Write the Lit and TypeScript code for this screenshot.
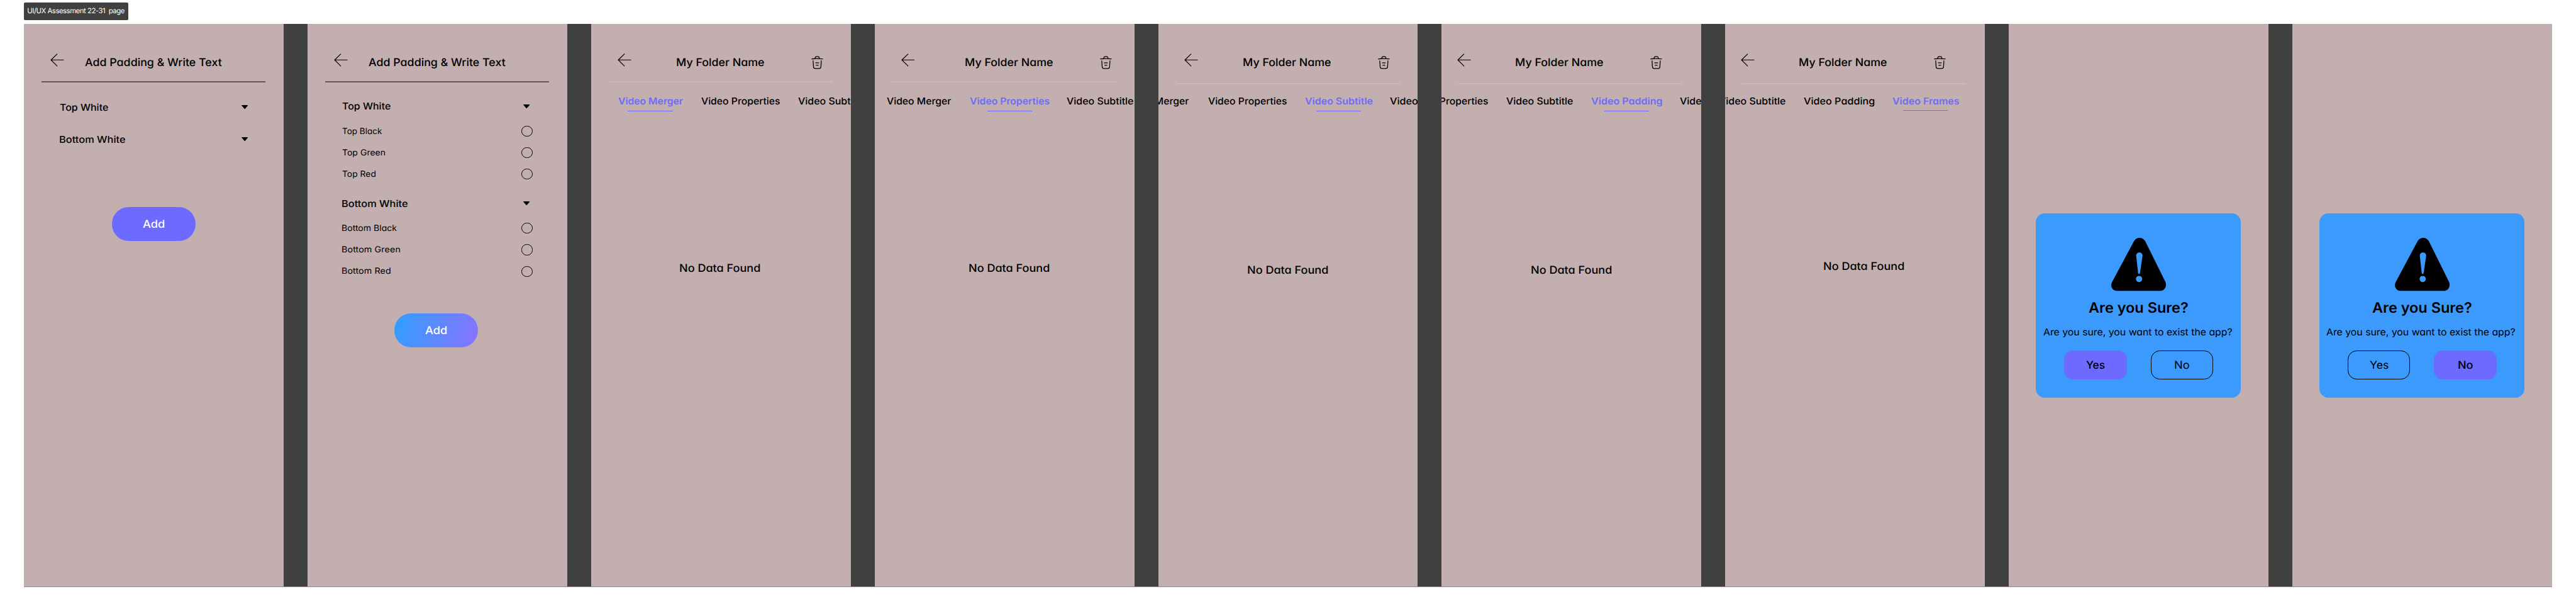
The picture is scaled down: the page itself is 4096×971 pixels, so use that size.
import { LitElement, html, css, svg, nothing } from "lit";
import { customElement, property } from "lit/decorators.js";
import { classMap } from "lit/directives/class-map.js";
import { styleMap } from "lit/directives/style-map.js";

const FONT = '"Inter", "Open Sans", sans-serif';
const MAX_STRETCH = 1.08;

/** One line of text whose visible width is tuned to `width` by stretch, then tracking. */
@customElement("fit-text")
class FitText extends LitElement {
  static styles = css`
    :host {
      display: block;
      flex: none;
      white-space: pre;
      font-family: "Inter", "Open Sans", sans-serif;
      text-rendering: geometricPrecision;
      font-feature-settings: "cv11" 1;
    }
    .run {
      display: inline-block;
      transform-origin: 0 0;
    }
  `;
  @property() text = "";
  @property({ type: Number }) width = 0;

  firstUpdated() {
    const run = this.renderRoot.querySelector(".run") as HTMLElement;
    this.style.width = `${this.width}px`;
    const scale = this.getBoundingClientRect().width / this.width;
    const advance = run.getBoundingClientRect().width / scale;
    const cs = getComputedStyle(this);
    const size = parseFloat(cs.getPropertyValue("--size"));
    const drop = parseFloat(cs.getPropertyValue("--drop")) || 0;
    const ctx = document.createElement("canvas").getContext("2d")!;
    ctx.font = `${cs.fontWeight} 100px ${FONT}`;
    const first = ctx.measureText(this.text[0]);
    const last = ctx.measureText(this.text[this.text.length - 1]);
    const left = (-first.actualBoundingBoxLeft * size) / 100;
    const right = ((last.width - last.actualBoundingBoxRight) * size) / 100;
    const ink = advance - left - right;
    const stretch = Math.max(1, Math.min(MAX_STRETCH, this.width / ink));
    run.style.letterSpacing = `${(this.width / stretch - ink) / (this.text.length - 1)}px`;
    run.style.marginLeft = `${-left * stretch}px`;
    run.style.transform = `translateY(${drop}px) scaleX(${stretch})`;
  }

  render() {
    return html`<span class="run">${this.text}</span>`;
  }
}

const backIcon = svg`<svg class="icon" width="23" height="22" viewBox="0 0 23 22" fill="none" stroke="#000" stroke-width="1.25" stroke-linecap="round" stroke-linejoin="round"><path d="M11.3 .9 1.2 10.8l10.1 10.1"/><path d="M1.4 10.8h20.8"/></svg>`;

const trashIcon = svg`<svg class="icon" width="24" height="24" viewBox="0 0 24 24" fill="none" stroke="#000" stroke-width="1.35" stroke-linecap="round" stroke-linejoin="round"><path d="M21 5.98c-3.33-.33-6.68-.5-10.02-.5-1.98 0-3.96.1-5.94.3L3 5.98"/><path d="M8.5 4.97l.22-1.31C8.88 2.71 9 2 10.69 2h2.62c1.69 0 1.82.75 1.97 1.67l.22 1.3"/><path d="M18.85 9.14l-.65 10.07C18.09 20.78 18 22 15.21 22H8.79C6 22 5.91 20.78 5.8 19.21L5.15 9.14"/><path d="M10.33 16.5h3.33M9.5 12.5h5"/></svg>`;

const caretIcon = svg`<svg class="icon" width="11" height="7" viewBox="0 0 11 7"><path d="M.6 0h9.8q.8 0 .3.7L6.2 6q-.7.8-1.4 0L.3.7Q-.2 0 .6 0z"/></svg>`;

const warnIcon = svg`<svg class="icon" width="92" height="89" viewBox="0 0 92 89"><path fill-rule="evenodd" d="M38 5.600C42.200-1.700 52.500-1.700 56.800 5.600L90.300 73.200C93.600 79.600 90 88.600 81.800 88.600H9.800C1.600 88.600-2.200 80.500 1.500 73.600zM47 24.400c-3.400 0-5.500 2.500-5.300 5.800l3.200 28.400c.2 2.300 3 2.300 3.200 0l4.200-28.400c.2-3.300-1.900-5.800-5.300-5.800zM46.500 63.500a5.200 5.200 0 1 0 .01 0z"/></svg>`;

type Tab = { text: string; x: number; width: number; active?: boolean };

const merger = (x: number): Tab => ({ text: "Video Merger", x, width: 107 });
const properties = (x: number): Tab => ({ text: "Video Properties", x, width: 131 });
const subtitle = (x: number): Tab => ({ text: "Video Subtitle", x, width: 111 });
const padding = (x: number): Tab => ({ text: "Video Padding", x, width: 117.5 });
const frames = (x: number): Tab => ({ text: "Video Frames", x, width: 110 });
const on = (tab: Tab, width: number): Tab => ({ ...tab, width, active: true });

type Folder = {
  back: number;
  title: number;
  trash: number;
  rule: [number, number];
  tabsY: number;
  tabs: Tab[];
  empty: [number, number];
};

const folders: Folder[] = [
  { back: 44, title: 143.3, trash: 366, rule: [29, 96], tabsY: 117.2, empty: [149.3, 394],
    tabs: [on(merger(45.3), 107.8), properties(184.3), subtitle(346.3)] },
  { back: 44, title: 152.5, trash: 375, rule: [29, 96], tabsY: 117.2, empty: [158.5, 394],
    tabs: [merger(20.3), on(properties(159.3), 132.7), subtitle(321.3)] },
  { back: 44, title: 142.5, trash: 365, rule: [29, 99], tabsY: 117.2, empty: [150.7, 397],
    tabs: [merger(-56), properties(83.5), on(subtitle(245.3), 112.5), padding(387.5)] },
  { back: 26, title: 124.5, trash: 347, rule: [27, 99], tabsY: 117.2, empty: [150.7, 397],
    tabs: [properties(-54), subtitle(108.3), on(padding(250.3), 118), frames(398.3)] },
  { back: 26, title: 124.5, trash: 347, rule: [27, 99], tabsY: 116.2, empty: [165.7, 391],
    tabs: [subtitle(-11), padding(131.5), on(frames(279.3), 111)] },
];

const px = (n: number) => `${n}px`;

@customElement("app-root")
class AppRoot extends LitElement {
  static styles = css`
    :host {
      display: block;
      width: 4096px;
      height: 971px;
      overflow: hidden;
      background: #fff;
    }
    .page {
      zoom: 0.95123;
      width: 4306px;
      height: 1021px;
      padding: 4px 40px 0;
      box-sizing: border-box;
    }
    .icon {
      display: block;
      flex: none;
    }
    .tag {
      --size: 12;
      display: flex;
      width: 174px;
      height: 30px;
      box-sizing: border-box;
      padding: 6px 0 0 6.5px;
      border-radius: 2px;
      background: #404040;
      color: #fff;
      font-size: 12px;
      line-height: 16px;
      margin-bottom: 6px;
    }
    .tag fit-text {
      font-feature-settings: normal;
    }
    .board {
      --drop: 0.9;
      display: flex;
      gap: 40px;
      height: 940px;
      background: #404040;
      border-bottom: 1px solid #8d8383;
    }
    .screen {
      width: 434px;
      height: 940px;
      flex: none;
      overflow: hidden;
      background: #c3afaf;
      display: flex;
      flex-direction: column;
      align-items: flex-start;
    }
    .s14 { --size: 14; font-size: 14px; line-height: 21px; font-weight: 400; }
    .s16 { --size: 16; font-size: 16px; line-height: 24px; font-weight: 500; }
    .s18 { --size: 18; font-size: 18px; line-height: 27px; font-weight: 500; }
    .s24 { --size: 24; font-size: 24px; line-height: 36px; font-weight: 600; }
    .light { font-weight: 400; }
    .header {
      display: flex;
      align-items: flex-start;
      height: 96px;
      box-sizing: border-box;
      padding-top: 49.200px;
      flex: none;
    }
    .header .title { margin-top: 0.800px; }
    .header .trash { margin-top: 3.200px; }
    .rule {
      width: 375px;
      height: 2px;
      flex: none;
      background: #c9bbbb;
    }
    .rule.dark { background: #615757; margin-left: 29px; }
    .group {
      display: flex;
      align-items: center;
      justify-content: space-between;
      width: 314px;
      height: 24px;
      margin-left: 60.400px;
      flex: none;
    }
    .group.open { margin-left: 58.500px; width: 313.500px; }
    .options {
      display: flex;
      flex-direction: column;
      gap: 14.900px;
      width: 317.500px;
      margin: 19.200px 0 0 58.500px;
    }
    .option {
      display: flex;
      align-items: center;
      justify-content: space-between;
      height: 21px;
    }
    .radio {
      width: 18px;
      height: 18px;
      box-sizing: border-box;
      border: 1px solid #000;
      border-radius: 50%;
    }
    .first { margin-top: 29.200px; }
    .second { margin-top: 30px; }
    .first.open { margin-top: 27.600px; }
    .second.open { margin-top: 26.300px; }
    .add {
      display: flex;
      align-items: center;
      justify-content: center;
      width: 140px;
      height: 56px;
      border-radius: 28px;
      margin: 101px 0 0 147px;
      background: #6c6aff;
      color: #fff;
      flex: none;
    }
    .add.gradient {
      margin: 60.200px 0 0 145px;
      background: linear-gradient(105deg, #369bff 8%, #8276ff 92%);
    }
    .tabs {
      display: flex;
      height: 30px;
      flex: none;
    }
    .tab {
      display: flex;
      flex-direction: column;
      align-items: center;
      gap: 3.800px;
      flex: none;
    }
    .tab.active {
      color: #6c6cfb;
    }
    .tab.active .s16 { font-weight: 600; }
    .bar {
      width: 75px;
      height: 1px;
      background: #6c6cfb;
    }
    .card {
      display: flex;
      flex-direction: column;
      align-items: center;
      width: 343px;
      height: 308px;
      box-sizing: border-box;
      padding-top: 41.300px;
      margin: 316px 0 0 45px;
      border-radius: 15px;
      background: #3b9afc;
    }
    .warn { margin-left: 1.500px; }
    .heading { margin-top: 8.900px; }
    .message { margin: 10.900px 3px 0 0; font-weight: 400; }
    .actions {
      display: flex;
      gap: 40px;
      margin: 19.800px 0 0 1px;
    }
    .button {
      display: flex;
      align-items: center;
      justify-content: center;
      width: 105px;
      height: 48px;
      box-sizing: border-box;
      border: 1px solid #000;
      border-radius: 15px;
    }
    .button.primary {
      border-color: #6c6aff;
      background: #6c6aff;
    }
  `;

  private text(text: string, width: number, cls: string) {
    return html`<fit-text class=${cls} .text=${text} .width=${width}></fit-text>`;
  }

  private paddingHeader(back: number, title: number) {
    return html`<div class="header">
        <div style=${styleMap({ marginLeft: px(back) })}>${backIcon}</div>
        <div class="title" style=${styleMap({ marginLeft: px(title - back - 23) })}>
          ${this.text("Add Padding & Write Text", 228.3, "s18")}
        </div>
      </div>
      <div class="rule dark"></div>`;
  }

  private group(text: string, width: number, cls: string) {
    return html`<div class="group ${cls}">${this.text(text, width, "s16")}${caretIcon}</div>`;
  }

  private options(rows: [string, number][]) {
    return html`<div class="options">
      ${rows.map(
        ([t, w]) => html`<div class="option">${this.text(t, w, "s14")}<span class="radio"></span></div>`
      )}
    </div>`;
  }

  private folder(f: Folder) {
    let edge = 0;
    return html`<section class="screen">
      <div class="header">
        <div style=${styleMap({ marginLeft: px(f.back) })}>${backIcon}</div>
        <div class="title" style=${styleMap({ marginLeft: px(f.title - f.back - 23) })}>
          ${this.text("My Folder Name", 145.5, "s18")}
        </div>
        <div class="trash" style=${styleMap({ marginLeft: px(f.trash - f.title - 145.5) })}>${trashIcon}</div>
      </div>
      <div
        class="rule"
        style=${styleMap({ marginLeft: px(f.rule[0]), marginTop: px(f.rule[1] - 96) })}
      ></div>
      <div class="tabs" style=${styleMap({ marginTop: px(f.tabsY - f.rule[1] - 2) })}>
        ${f.tabs.map((tab) => {
          const gap = tab.x - edge;
          edge = tab.x + tab.width;
          return html`<div
            class=${classMap({ tab: true, active: !!tab.active })}
            style=${styleMap({ marginLeft: px(gap) })}
          >
            ${this.text(tab.text, tab.width, "s16")}
            ${tab.active ? html`<span class="bar"></span>` : nothing}
          </div>`;
        })}
      </div>
      <div
        style=${styleMap({ marginLeft: px(f.empty[0]), marginTop: px(f.empty[1] - f.tabsY - 30) })}
      >
        ${this.text("No Data Found", 133.2, "s18")}
      </div>
    </section>`;
  }

  private dialog(primary: "Yes" | "No") {
    const button = (label: "Yes" | "No", width: number) => html`<div
      class=${classMap({ button: true, primary: primary === label })}
    >
      ${this.text(label, width, primary === label ? "s18" : "s18 light")}
    </div>`;
    return html`<section class="screen">
      <div class="card">
        <div class="warn">${warnIcon}</div>
        <div class="heading">${this.text("Are you Sure?", 165.3, "s24")}</div>
        <div class="message">
          ${this.text("Are you sure, you want to exist the app?", 315, "s16 light")}
        </div>
        <div class="actions">${button("Yes", 30.6)}${button("No", 23.4)}</div>
      </div>
    </section>`;
  }

  render() {
    return html`<div class="page">
      <div class="tag">${this.text("UI/UX Assessment 22-31  page", 161.5, "")}</div>
      <div class="board">
        <section class="screen">
          ${this.paddingHeader(44, 102.7)}
          ${this.group("Top White", 80, "first")}
          ${this.group("Bottom White", 109, "second")}
          <div class="add">${this.text("Add", 35.5, "s18")}</div>
        </section>
        <section class="screen">
          ${this.paddingHeader(44, 102.7)}
          ${this.group("Top White", 80, "first open")}
          ${this.options([["Top Black", 66], ["Top Green", 71], ["Top Red", 55]])}
          ${this.group("Bottom White", 109, "second open")}
          ${this.options([["Bottom Black", 91.3], ["Bottom Green", 96.5], ["Bottom Red", 80.5]])}
          <div class="add gradient">${this.text("Add", 35.5, "s18")}</div>
        </section>
        ${folders.map((f) => this.folder(f))}
        ${this.dialog("Yes")} ${this.dialog("No")}
      </div>
    </div>`;
  }
}
